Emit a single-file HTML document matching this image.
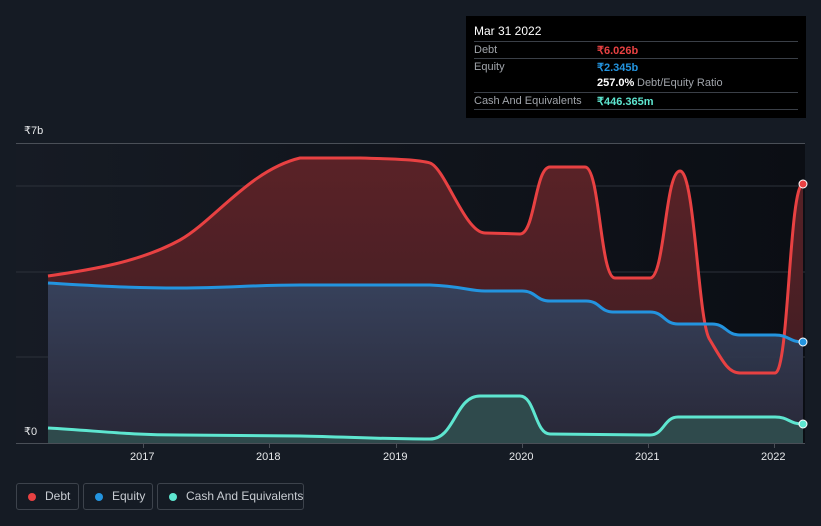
<!DOCTYPE html>
<html><head><meta charset="utf-8"><style>
body{margin:0;width:821px;height:526px;background:#151b24;font-family:"Liberation Sans",sans-serif;overflow:hidden;position:relative}
.tt{position:absolute;left:466px;top:16px;width:340px;height:102px;background:#000;color:#fff;font-size:11px}
.tt .h{position:absolute;left:8px;top:8px;font-size:12px}
.row{position:absolute;left:8px;width:324px;border-top:1px solid #3a3f47;height:17px}
.row span{position:absolute;top:2px;white-space:nowrap}
.l{left:0;color:#a0a4aa}.v{left:123px;font-weight:bold}
.lg{position:absolute;top:483px;height:27px;border:1px solid #3d434c;border-radius:3px;color:#c8ccd2;font-size:12px;line-height:25px;box-sizing:border-box;white-space:nowrap}
.lg i{position:absolute;left:11px;top:9px;width:8px;height:8px;border-radius:50%}
.ax{position:absolute;color:#e6e8ea;font-size:11px}
</style></head><body>
<svg width="821" height="526" style="position:absolute;left:0;top:0">
<defs>
<linearGradient id="bg" x1="0" x2="1"><stop offset="0" stop-color="#161b24"/><stop offset="1" stop-color="#0b0e14"/></linearGradient>
<linearGradient id="rd" x1="0" y1="0" x2="0" y2="1"><stop offset="0" stop-color="#5a2227"/><stop offset="1" stop-color="#3a1c22"/></linearGradient>
<linearGradient id="bl" x1="0" y1="0" x2="0" y2="1"><stop offset="0" stop-color="#36435e"/><stop offset="1" stop-color="#272838"/></linearGradient>
</defs>
<rect x="16" y="143" width="789" height="300" fill="url(#bg)"/>
<g stroke="#2c313a" stroke-width="1"><line x1="16" y1="186" x2="805" y2="186"/><line x1="16" y1="272" x2="805" y2="272"/><line x1="16" y1="357" x2="805" y2="357"/></g>
<line x1="16" y1="143.5" x2="805" y2="143.5" stroke="#4a4f57"/>
<path d="M48,276 C90,270 140,262 180,240 C215,220 250,170 300,158 L360,158 C400,159 420,160 430,163 C445,168 465,233 485,233 L520,234 C535,234 535,167 550,167 L585,167 C600,167 600,278 615,278 L650,278 C665,278 665,171 680,171 C695,171 698,325 710,340 C722,360 728,373 740,373 L775,373 C789,373 789,184 803,184 L803,443 L48,443Z" fill="url(#rd)"/>
<path d="M48,283 C100,286 130,288 180,288 C230,288 250,285 300,285 L430,285 C460,286 470,291 485,291 L522,291 C536,291 536,301 550,301 L586,301 C600,301 600,312 613,312 L650,312 C664,312 664,324 678,324 L712,324 C726,324 726,335 740,335 L775,335 C789,335 789,342 803,342 L803,443 L48,443Z" fill="url(#bl)" opacity="0.95"/>
<path d="M48,428 C100,431 130,435 180,435 L300,436 C350,437 380,439 430,439 C455,439 455,396 480,396 L520,396 C535,396 535,434 550,434 L650,435 C664,435 664,417 678,417 L775,417 C789,417 789,424 803,424 L803,443 L48,443Z" fill="#2f4a4c"/>
<path d="M48,276 C90,270 140,262 180,240 C215,220 250,170 300,158 L360,158 C400,159 420,160 430,163 C445,168 465,233 485,233 L520,234 C535,234 535,167 550,167 L585,167 C600,167 600,278 615,278 L650,278 C665,278 665,171 680,171 C695,171 698,325 710,340 C722,360 728,373 740,373 L775,373 C789,373 789,184 803,184" fill="none" stroke="#e84142" stroke-width="3"/>
<path d="M48,283 C100,286 130,288 180,288 C230,288 250,285 300,285 L430,285 C460,286 470,291 485,291 L522,291 C536,291 536,301 550,301 L586,301 C600,301 600,312 613,312 L650,312 C664,312 664,324 678,324 L712,324 C726,324 726,335 740,335 L775,335 C789,335 789,342 803,342" fill="none" stroke="#2394df" stroke-width="3"/>
<path d="M48,428 C100,431 130,435 180,435 L300,436 C350,437 380,439 430,439 C455,439 455,396 480,396 L520,396 C535,396 535,434 550,434 L650,435 C664,435 664,417 678,417 L775,417 C789,417 789,424 803,424" fill="none" stroke="#5ee6d0" stroke-width="3"/>
<line x1="16" y1="443.5" x2="805" y2="443.5" stroke="#4a4f57"/>
<g stroke="#4a4f57"><line x1="143.5" y1="443" x2="143.5" y2="448"/><line x1="269.5" y1="443" x2="269.5" y2="448"/><line x1="396.5" y1="443" x2="396.5" y2="448"/><line x1="522.5" y1="443" x2="522.5" y2="448"/><line x1="648.5" y1="443" x2="648.5" y2="448"/><line x1="774.5" y1="443" x2="774.5" y2="448"/></g>
<circle cx="803" cy="184" r="4" fill="#e84142" stroke="#fff" stroke-width="1"/>
<circle cx="803" cy="342" r="4" fill="#2394df" stroke="#fff" stroke-width="1"/>
<circle cx="803" cy="424" r="4" fill="#5ee6d0" stroke="#fff" stroke-width="1"/>
</svg>
<div class="ax" style="left:24px;top:124px">₹7b</div>
<div class="ax" style="left:24px;top:425px">₹0</div>
<div class="ax" style="left:130px;top:451px">2017</div>
<div class="ax" style="left:256px;top:451px">2018</div>
<div class="ax" style="left:383px;top:451px">2019</div>
<div class="ax" style="left:509px;top:451px">2020</div>
<div class="ax" style="left:635px;top:451px">2021</div>
<div class="ax" style="left:761px;top:451px">2022</div>
<div class="tt">
<div class="h">Mar 31 2022</div>
<div class="row" style="top:25px"><span class="l">Debt</span><span class="v" style="color:#e84142">₹6.026b</span></div>
<div class="row" style="top:42px"><span class="l">Equity</span><span class="v" style="color:#2394df">₹2.345b</span></div>
<div class="row" style="top:59px;border-top:none"><span class="v" style="color:#fff">257.0%</span><span style="left:163px;color:#a0a4aa">Debt/Equity Ratio</span></div>
<div class="row" style="top:76px"><span class="l">Cash And Equivalents</span><span class="v" style="color:#5ee6d0">₹446.365m</span></div>
<div class="row" style="top:93px;height:0"></div>
</div>
<div class="lg" style="left:16px;width:63px"><i style="background:#e84142"></i><span style="margin-left:28px">Debt</span></div>
<div class="lg" style="left:83px;width:70px"><i style="background:#2394df"></i><span style="margin-left:28px">Equity</span></div>
<div class="lg" style="left:157px;width:147px"><i style="background:#5ee6d0"></i><span style="margin-left:28px">Cash And Equivalents</span></div>
</body></html>
